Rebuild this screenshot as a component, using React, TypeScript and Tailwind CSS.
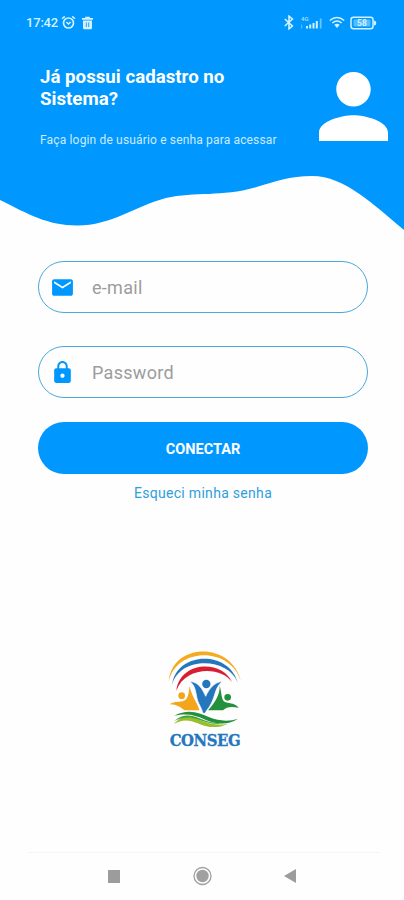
import type { ReactNode } from 'react'

interface FieldProps {
  icon: ReactNode
  label: string
  type: string
}

function StatusBar() {
  return (
    <div className="flex h-[45px] items-center justify-between pl-[26px] pr-[27px] text-[#d3f2ff]">
      <div className="flex items-center">
        <span className="w-[34px] whitespace-nowrap text-[13px] font-medium tracking-[-0.2px]">17:42</span>
        <svg className="ml-px h-[15px] w-[15px]" viewBox="0 0 15 15" fill="none" stroke="currentColor">
          <circle cx="7.5" cy="8" r="5" strokeWidth="1.7" />
          <path d="M1 3.8 3.8 1.4M14 3.8 11.2 1.4M5.4 7l2.1 2 2.2-2" strokeWidth="1.5" />
        </svg>
        <svg className="ml-[6px] h-[14px] w-[11px]" viewBox="0 0 11 14">
          <path d="M0 2h3.2V.8h4.6V2H11v1.8H0zM1 4.5h9V12q0 1.2-1.2 1.2H2.2Q1 13.2 1 12z" fill="currentColor" />
          <path d="M4.3 6.5V11M6.7 6.5V11" stroke="#2a9df0" />
        </svg>
      </div>
      <div className="flex items-center">
        <svg className="h-[15px] w-[10px]" viewBox="0 0 10 15" fill="none" stroke="currentColor" strokeWidth="1.6">
          <path d="m.8 4 7.6 7L5 13.8V1.2L8.4 4 .8 11" />
        </svg>
        <svg className="ml-[6px] h-[15px] w-[23px]" viewBox="0 0 23 15" fill="currentColor">
          <text x="1" y="5.5" fontSize="6" fontWeight="500" opacity="0.8">4G</text>
          <path d="M6 11h2v2.5H6zM9.2 9.5h2v4h-2zM12.5 8h2v5.5h-2zM15.8 6h2v7.5h-2z" />
          <path d="M19.8 3.5h1.8v10h-1.8z" opacity="0.5" />
          <path d="M1 9.5h1.2v4H1z" opacity="0.4" />
        </svg>
        <svg className="ml-[6px] h-[13px] w-[16px]" viewBox="0 0 16 13" fill="none" stroke="currentColor">
          <path d="M.8 4.5Q8-1.5 15.2 4.5" strokeWidth="1.6" />
          <path d="M3.3 7Q8 3 12.7 7" strokeWidth="1.6" />
          <path d="M5.3 8.8Q8 6.6 10.7 8.8L8 12z" fill="currentColor" stroke="none" />
        </svg>
        <svg className="ml-[5px] h-[14px] w-[27px]" viewBox="0 0 27 14">
          <rect x="1" y="1.2" width="22" height="11.6" rx="2.5" fill="none" stroke="currentColor" strokeWidth="1.5" />
          <rect x="3.5" y="3.5" width="17" height="7" rx="1" fill="currentColor" opacity="0.4" />
          <path d="M24 4.5q2.3 0 2.3 2.5T24 9.5z" fill="currentColor" />
          <text x="12" y="10" textAnchor="middle" fontSize="8.5" fontWeight="700" fill="currentColor">58</text>
        </svg>
      </div>
    </div>
  )
}

function Header() {
  return (
    <header>
      <div className="h-[176px] bg-[#0098ff]">
        <StatusBar />
        <div className="flex justify-between pl-10 pr-4 text-white">
          <div className="pt-[21px]">
            <h1 className="w-[210px] text-[18.7px] font-bold leading-[22px]">
              Já possui cadastro no <br />
              Sistema?
            </h1>
            <p className="mt-[22px] whitespace-nowrap text-[12px] leading-[16px] tracking-[0.16px] text-[#cdeaff]">
              Faça login de usuário e senha para acessar
            </p>
          </div>
          <svg className="mt-[27px] h-[69px] w-[69px] shrink-0" viewBox="4 4 16 16" fill="currentColor">
            <path d="M12 12c2.210 0 4-1.790 4-4s-1.790-4-4-4-4 1.790-4 4 1.790 4 4 4zm0 2c-2.670 0-8 1.340-8 4v2h16v-2c0-2.660-5.330-4-8-4z" />
          </svg>
        </div>
      </div>
      <svg className="block h-[56px] w-full" viewBox="0 176 404 56">
        <path
          d="M0 175V200C28 214 48 225.5 77 225.5C112 225.5 135 206 166 198C195 191.5 222 197 255 187.500C275 181.500 290 176 312 176C345 176 374 205 404 230V175Z"
          fill="#0098ff"
        />
      </svg>
    </header>
  )
}

function Field({ icon, label, type }: FieldProps) {
  return (
    <label className="flex h-[52px] items-center rounded-full border border-[#4aa8da] pl-[11px]">
      {icon}
      <input
        type={type}
        placeholder={label}
        className="ml-[17px] w-[240px] bg-transparent text-[18px] tracking-[0.3px] outline-none placeholder:text-[#9c9c9c]"
      />
    </label>
  )
}

function Logo() {
  return (
    <div className="flex w-[74px] flex-col items-center">
      <svg className="h-[76px] w-[74px]" viewBox="54 30 222 228">
        {/* rainbow */}
        <path d="M56 122C66 2 248 0 273 123C244 17 80 16 56 122Z" fill="#f5ab20" />
        <path d="M66 132C80 29 238 28 263 125C234 47 88 46 66 132Z" fill="#2477bd" />
        <path d="M79 149C90 59 218 56 246 124C216 76 106 74 79 149Z" fill="#d81f32" />
        {/* people */}
        <circle cx="95" cy="164" r="10" fill="#f5a51c" />
        <path d="M119 135C115 161 115 176 98 181C81 184 70 182 59 190C78 189 92 199 104 208H148C143 185 125 168 119 135Z" fill="#f5a51c" />
        <circle cx="233" cy="169" r="10" fill="#23913b" />
        <path d="M209 134C210 162 195 184 174 208H219C229 197 247 195 266 201C257 187 241 188 227 184C213 179 216 157 209 134Z" fill="#23913b" />
        <path d="M119 121C147 124 157 144 167 166C178 143 191 125 217 121C195 139 196 164 184 187C176 202 171 206 165 217H159C156 204 147 190 143 179C136 156 139 136 119 121Z" fill="#2477bd" stroke="white" strokeWidth="2" />
        <circle cx="169" cy="129" r="12.5" fill="#2477bd" />
        {/* hills */}
        <path d="M73 224C114 202 148 215 178 229C207 241 239 242 264 233C230 256 193 247 166 236C137 223 111 216 73 224Z" fill="#23913b" />
        <path d="M72 249C96 220 126 226 151 238C180 250 207 254 234 248C196 266 168 258 143 247C116 234 94 236 72 249Z" fill="#99bf2d" />
        <path d="M73 240C96 219 122 220 146 231C171 242 198 249 222 247C190 253 165 243 142 235C116 226 95 229 73 240Z" fill="#43a13b" />
      </svg>
      <span className="mt-[4px] whitespace-nowrap font-['DejaVu_Serif_Condensed','DejaVu_Serif',serif] text-[16.5px] font-bold leading-[20px] tracking-[-0.4px] text-[#2477bd] [font-stretch:condensed] [-webkit-text-stroke:0.3px_#2477bd]">
        CONSEG
      </span>
    </div>
  )
}

function NavigationBar() {
  return (
    <nav className="ml-[28px] mr-[24px] flex h-[48px] items-center border-t border-[#f5f5f5] pb-[1px] pl-[80px]">
      <span className="h-[13px] w-[12px] bg-[#9c9c9c]" />
      <svg className="ml-[73px] h-[20px] w-[20px]" viewBox="0 0 20 20">
        <circle cx="9.5" cy="10" r="8.5" fill="none" stroke="#a0a0a0" strokeWidth="1.3" />
        <circle cx="9.5" cy="10" r="6.2" fill="#a0a0a0" />
      </svg>
      <svg className="ml-[71px] h-[14px] w-[12px]" viewBox="0 0 12 14" fill="#9c9c9c">
        <path d="M12 0v14L0 7z" />
      </svg>
    </nav>
  )
}

export default function App() {
  return (
    <div className="flex h-[900px] w-[404px] flex-col bg-[#fefefe] font-[Roboto,sans-serif]">
      <Header />
      <main className="flex flex-1 flex-col pl-[38px] pr-[36px] pt-[29px]">
        <Field
          label="e-mail"
          type="email"
          icon={
            <svg className="h-[25px] w-[25px]" viewBox="0 0 24 24" fill="#0098ff">
              <path d="M20 4H4c-1.100 0-1.990.900-1.990 2L2 18c0 1.100.900 2 2 2h16c1.100 0 2-.900 2-2V6c0-1.100-.900-2-2-2zm0 4-8 5-8-5V6l8 5 8-5v2z" />
            </svg>
          }
        />
        <div className="mt-[33px]">
          <Field
            label="Password"
            type="password"
            icon={
              <svg className="h-[25px] w-[25px]" viewBox="0 0 24 24" fill="#0098ff">
                <path d="M18 8h-1V6c0-2.760-2.240-5-5-5S7 3.240 7 6v2H6c-1.100 0-2 .900-2 2v10c0 1.100.900 2 2 2h12c1.100 0 2-.900 2-2V10c0-1.100-.900-2-2-2zm-6 9c-1.100 0-2-.900-2-2s.900-2 2-2 2 .900 2 2-.900 2-2 2zm3.100-9H8.900V6c0-1.710 1.390-3.100 3.100-3.100s3.100 1.390 3.100 3.100v2z" />
              </svg>
            }
          />
        </div>
        <button className="mt-6 h-[52px] rounded-full bg-[#0098ff] pt-[3px] text-[14.5px] font-bold text-white">
          CONECTAR
        </button>
        <a className="mt-[9px] text-center text-[14px] leading-5 tracking-[0.3px] text-[#2f9fdc]" href="#">
          Esqueci minha senha
        </a>
        <div className="mt-[148px] pl-[130px]">
          <Logo />
        </div>
      </main>
      <NavigationBar />
    </div>
  )
}
